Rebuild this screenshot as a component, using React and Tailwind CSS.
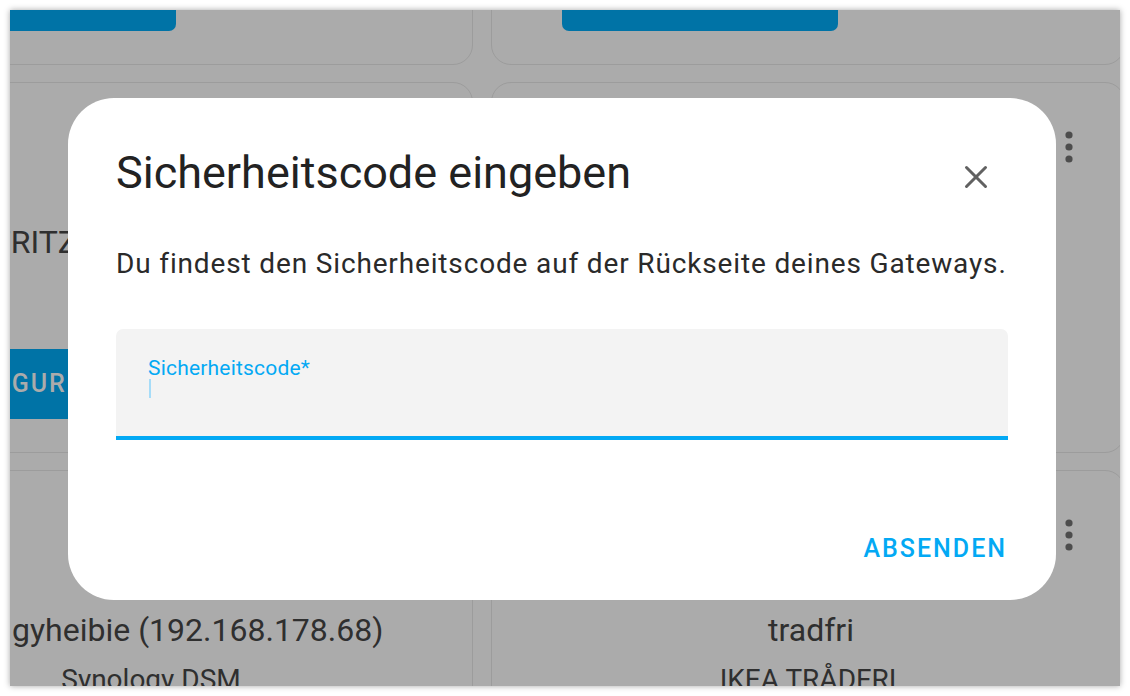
import React from "react";
import { X } from "lucide-react";

function Dots() {
  return (
    <svg width="10" height="36" viewBox="0 0 10 36">
      <circle cx="5" cy="4" r="3.6" fill="#4d4d4d" />
      <circle cx="5" cy="16" r="3.6" fill="#4d4d4d" />
      <circle cx="5" cy="28" r="3.6" fill="#4d4d4d" />
    </svg>
  );
}

function Card({ width, title, subtitle, titleClass, label }) {
  return (
    <div
      className={`${width} h-[371px] shrink-0 rounded-[20px] border border-[#9c9c9c] flex flex-col`}
    >
      <div className="h-[266px] flex flex-col">
        {/* Header */}
        <div className="flex justify-end pt-[48px] pr-[50px]">
          <Dots />
        </div>
        <div
          className={`mt-[59px] h-[32px] text-[32px] leading-none whitespace-nowrap text-[#2f2f2f] ${titleClass}`}
        >
          {title}
        </div>
        <div className="mt-[20px] h-[28px] text-[28px] leading-none whitespace-nowrap text-center text-[#2f2f2f]">
          {subtitle}
        </div>
      </div>
      <div className="ml-[70px] w-[276px] h-[70px] rounded-[7px] bg-[#0073a6] flex items-center justify-center">
        {label && (
          <span className="text-[25px] font-medium tracking-[2px] text-[#ababab]">
            {label}
          </span>
        )}
      </div>
    </div>
  );
}

export default function App() {
  return (
    <div
      className="w-[1130px] h-[696px] bg-white p-[10px]"
      style={{ fontFamily: "Roboto, 'Noto Sans', sans-serif" }}
    >
      <div className="relative w-[1110px] h-[676px] overflow-hidden bg-[#ababab] shadow-[0_0_6px_rgba(0,0,0,0.35)]">
        {/* Cards behind the scrim */}
        <div className="-ml-[181px] -mt-[316px] flex gap-[18px]">
          <div className="flex flex-col gap-[17px]">
            <Card width="w-[644px]" title="" subtitle="" titleClass="" label="" />
            <Card
              width="w-[644px]"
              title="FRITZ!Box"
              subtitle=""
              titleClass="pl-[163px]"
              label="KONFIGURIEREN"
            />
            <Card
              width="w-[644px]"
              title="gyheibie (192.168.178.68)"
              subtitle="Synology DSM"
              titleClass="pl-[182px]"
              label=""
            />
          </div>
          <div className="flex flex-col gap-[17px]">
            <Card width="w-[634px]" title="" subtitle="" titleClass="" label="" />
            <Card width="w-[634px]" title="" subtitle="" titleClass="" label="" />
            <Card
              width="w-[634px]"
              title="tradfri"
              subtitle="IKEA TRÅDFRI"
              titleClass="text-center pl-[6px]"
              label=""
            />
          </div>
        </div>

        {/* Dialog */}
        <div className="absolute left-[58px] top-[88px] w-[988px] h-[502px] rounded-[46px] bg-white flex flex-col px-[48px]">
          <div className="flex items-start justify-between pt-[48px]">
            <h2 className="text-[45px] leading-[54px] text-[#222222]">
              Sicherheitscode eingeben
            </h2>
            <X size={38} strokeWidth={1.9} color="#616161" className="mt-[12px] mr-[13px]" />
          </div>
          <p className="mt-[44px] text-[28px] leading-[40px] tracking-[0.85px] whitespace-nowrap text-[#2a2a2a]">
            Du findest den Sicherheitscode auf der Rückseite deines Gateways.
          </p>
          <div className="mt-[45px] h-[111px] rounded-t-[7px] bg-[#f3f3f3] border-b-4 border-[#03a9f4] pl-[32px] pt-[29px]">
            <div className="text-[21px] leading-none tracking-[0.2px] text-[#03a9f4]">
              Sicherheitscode*
            </div>
            <div className="ml-[1px] w-[2px] h-[19px] bg-[#a6dcf8]" />
          </div>
          <div className="flex-1" />
          <div className="flex justify-end pb-[39px] pr-[1px]">
            <span className="text-[25px] leading-none font-medium tracking-[2px] text-[#03a9f4]">
              ABSENDEN
            </span>
          </div>
        </div>
      </div>
    </div>
  );
}
